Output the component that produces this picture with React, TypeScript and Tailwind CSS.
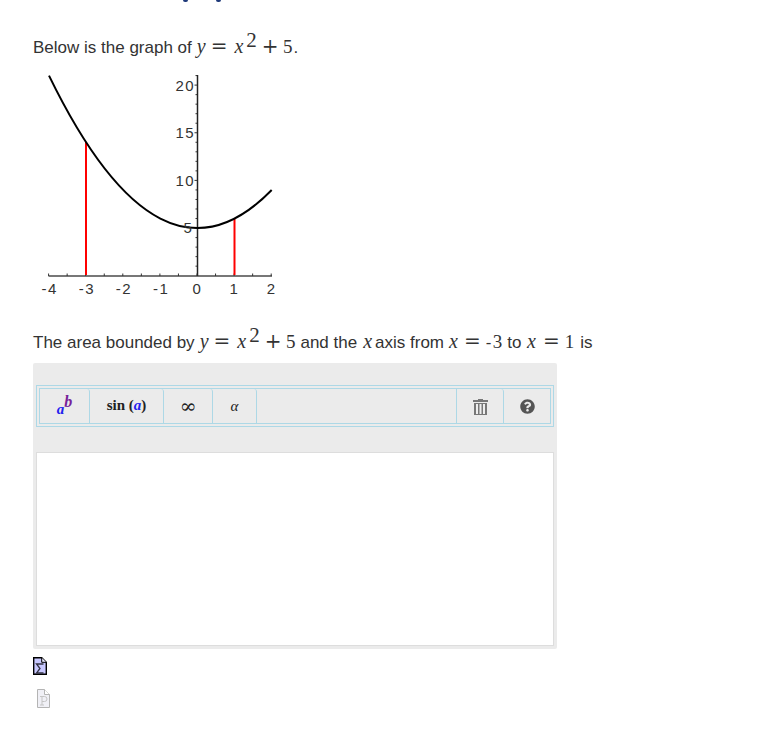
import React from "react";
import { FaQuestionCircle } from "react-icons/fa";

const SERIF = { fontFamily: '"Liberation Serif", serif' };

const Var = ({ children, className = "" }: { children: string; className?: string }) => (
  <i className={`font-['Liberation_Serif',serif] text-[20px] ${className}`}>{children}</i>
);

const Num = ({ children, className = "" }: { children: React.ReactNode; className?: string }) => (
  <span className={`font-['Liberation_Serif',serif] text-[19px] ${className}`}>{children}</span>
);

const Op = ({ children, className = "" }: { children: string; className?: string }) => (
  <span className={`font-['DejaVu_Serif',serif] text-[20px] ${className}`}>{children}</span>
);

// y = x^2 + 5, shared by both sentences
const Formula = () => (
  <>
    <Var className="ml-[5px]">y</Var>
    <Op className="ml-[5px]">=</Op>
    <Var className="ml-[7px]">x</Var>
    <span className="relative top-[-6px] ml-[3px] font-['Liberation_Serif',serif] text-[21px] leading-none">2</span>
    <Op className="ml-[5px]">+</Op>
    <Num className="ml-[4.5px]">5</Num>
  </>
);

const Graph = () => {
  const px = (x: number) => 197 + x * 37.1;
  const py = (y: number) => 275.7 - y * 9.53;
  const xTicks = [-8, -7, -6, -5, -4, -3, -2, -1, 0, 1, 2, 3, 4];
  const yTicks = Array.from({ length: 21 }, (_, i) => i + 1);

  return (
    <svg width="250" height="230" viewBox="33 70 250 230" className="block">
      {/* axes */}
      <line x1="48.5" y1="276" x2="272" y2="276" stroke="#777" strokeWidth="2" />
      <line x1="197.5" y1="75" x2="197.5" y2="276" stroke="#222" strokeWidth="1.5" />
      {xTicks.map((t) => (
        <line key={t} x1={px(t / 2)} x2={px(t / 2)} y1="273.5" y2="276" stroke="#333" />
      ))}
      {yTicks.map((t) => (
        <line key={t} x1={t % 5 === 0 ? 194.5 : 195.5} x2="197" y1={py(t)} y2={py(t)} stroke="#333" />
      ))}
      {/* red bounds */}
      <line x1="86" y1="142" x2="86" y2="275" stroke="#f00" strokeWidth="2" />
      <line x1="234.5" y1="218" x2="234.5" y2="275" stroke="#f00" strokeWidth="2" />
      {/* curve */}
      <path d="M49 75.6 Q160.4 304.3 271.7 190" fill="none" stroke="#000" strokeWidth="2" />
      {/* labels */}
      <g fontFamily='"Liberation Sans", sans-serif' fontSize="15" fill="#333" letterSpacing="1.5">
        {["20", "15", "10"].map((l, i) => (
          <text key={l} x="175.5" y={90.5 + i * 47.6}>
            {l}
          </text>
        ))}
        <text x="183.5" y="233">5</text>
        {[-4, -3, -2, -1].map((l) => (
          <text key={l} x={px(l) - 7} y="294">
            {l}
          </text>
        ))}
        {[0, 1, 2].map((l) => (
          <text key={l} x={px(l) - 4.5} y="294">
            {l}
          </text>
        ))}
      </g>
    </svg>
  );
};

const TrashIcon = () => (
  <svg width="15" height="17" viewBox="0 0 15 17">
    <path d="M5 1h5v1h5v2H0V2h5z" fill="#777" />
    <path d="M1 5h13v12H1z" fill="#777" />
    <path d="M3 6h2v10H3zM6.5 6h2v10h-2zM10 6h2v10h-2z" fill="#eee" />
  </svg>
);

const SigmaDoc = () => (
  <svg width="14" height="18" viewBox="0 0 14 18" className="block">
    <path d="M.7.7h8l4.6 4.6v12H.7z" fill="#c8c8ff" stroke="#000" strokeWidth="1.4" />
    <path d="M8.7.7v4.6h4.6" fill="#e8e8ff" stroke="#000" />
    <path d="M10.5 7H3.5l3.5 4.5-3.5 4.5h7" fill="none" stroke="#334" strokeWidth="1.3" />
  </svg>
);

const PDoc = () => (
  <svg width="13" height="19" viewBox="0 0 13 19" className="block">
    <path d="M.5.5h7l5 5v13H.5z" fill="#f0f0f6" stroke="#b4b4b4" />
    <path d="M7.5.5v5h5" fill="#fff" stroke="#b4b4b4" />
    <path d="M3 7.5h4.5a2.5 2.5 0 0 1 0 5H5M5 7.5v8.5M3 16h4" fill="none" stroke="#c4c4c4" />
  </svg>
);

const BTN = "flex items-center justify-center border-r border-[#add8e6] rounded-t-[3px] h-full";

const App: React.FC = () => {
  return (
    <div className="w-[759px] h-[736px] overflow-hidden bg-white pl-[33px] text-[17px] text-[#333] font-['Liberation_Sans',sans-serif]">
      {/* clipped heading descenders */}
      <div className="flex h-[2px] pl-[150px]">
        <span className="w-[5px] h-[2px] rounded-b-full bg-[#1f3a7a]" />
        <span className="w-[5px] h-[2px] rounded-b-full bg-[#1f3a7a] ml-[28px]" />
      </div>

      <p className="mt-[29px] h-[30px] leading-[30px] whitespace-pre">
        Below is the graph of<Formula /><span className="ml-[1px]">.</span>
      </p>

      <div className="mt-[9px]">
        <Graph />
      </div>

      <p className="mt-[26px] h-[30px] leading-[30px] whitespace-pre">
        The area bounded by<Formula /><span className="ml-[5px]">and the</span>
        <Var className="ml-[6px]">x</Var>
        <span className="ml-[3px]">axis from</span>
        <Var className="ml-[5px]">x</Var>
        <Op className="ml-[6px]">=</Op>
        <span className="ml-[5px]">-</span>
        <Num className="ml-[1.5px]">3</Num>
        <span className="ml-[5px]">to</span>
        <Var className="ml-[5.5px]">x</Var>
        <Op className="ml-[7px]">=</Op>
        <Num className="ml-[5px]">1</Num>
        <span className="ml-[6px]">is</span>
      </p>

      <div className="mt-[7px] w-[524px] h-[286px] rounded-[2px] bg-[#ebebeb] px-[3px] pt-[22px] flex flex-col">
        <div className="h-[42px] border border-[#add8e6] p-[2px]">
          <div className="flex h-full border border-[#add8e6]" style={SERIF}>
            <div className={`${BTN} w-[50px]`}>
              <span className="font-bold italic text-[15px] text-[#2222ee] mt-[6px]">a</span>
              <span className="font-bold italic text-[16px] text-[#772299] mb-[8px]">b</span>
            </div>
            <div className={`${BTN} w-[74px] pb-[2px] font-bold text-[15px] text-[#222]`}>
              sin&nbsp;(<i className="text-[#2222ee]">a</i>)
            </div>
            <div className={`${BTN} w-[49px] font-['DejaVu_Serif',serif] text-[20px] text-[#222]`}>∞</div>
            <div className={`${BTN} w-[44px] italic text-[15px] text-[#222]`}>α</div>
            <div className="w-[200px] h-full border-r border-[#add8e6]" />
            <div className={`${BTN} w-[47px]`}>
              <TrashIcon />
            </div>
            <div className="flex w-[46px] h-full items-center justify-center">
              <FaQuestionCircle className="text-[#555] text-[15px]" />
            </div>
          </div>
        </div>
        <div className="mt-[25px] h-[194px] border border-[#dddddd] bg-white" />
      </div>

      <div className="mt-[8px]">
        <SigmaDoc />
      </div>
      <div className="mt-[14px] ml-[4px]">
        <PDoc />
      </div>
    </div>
  );
};

export default App;
